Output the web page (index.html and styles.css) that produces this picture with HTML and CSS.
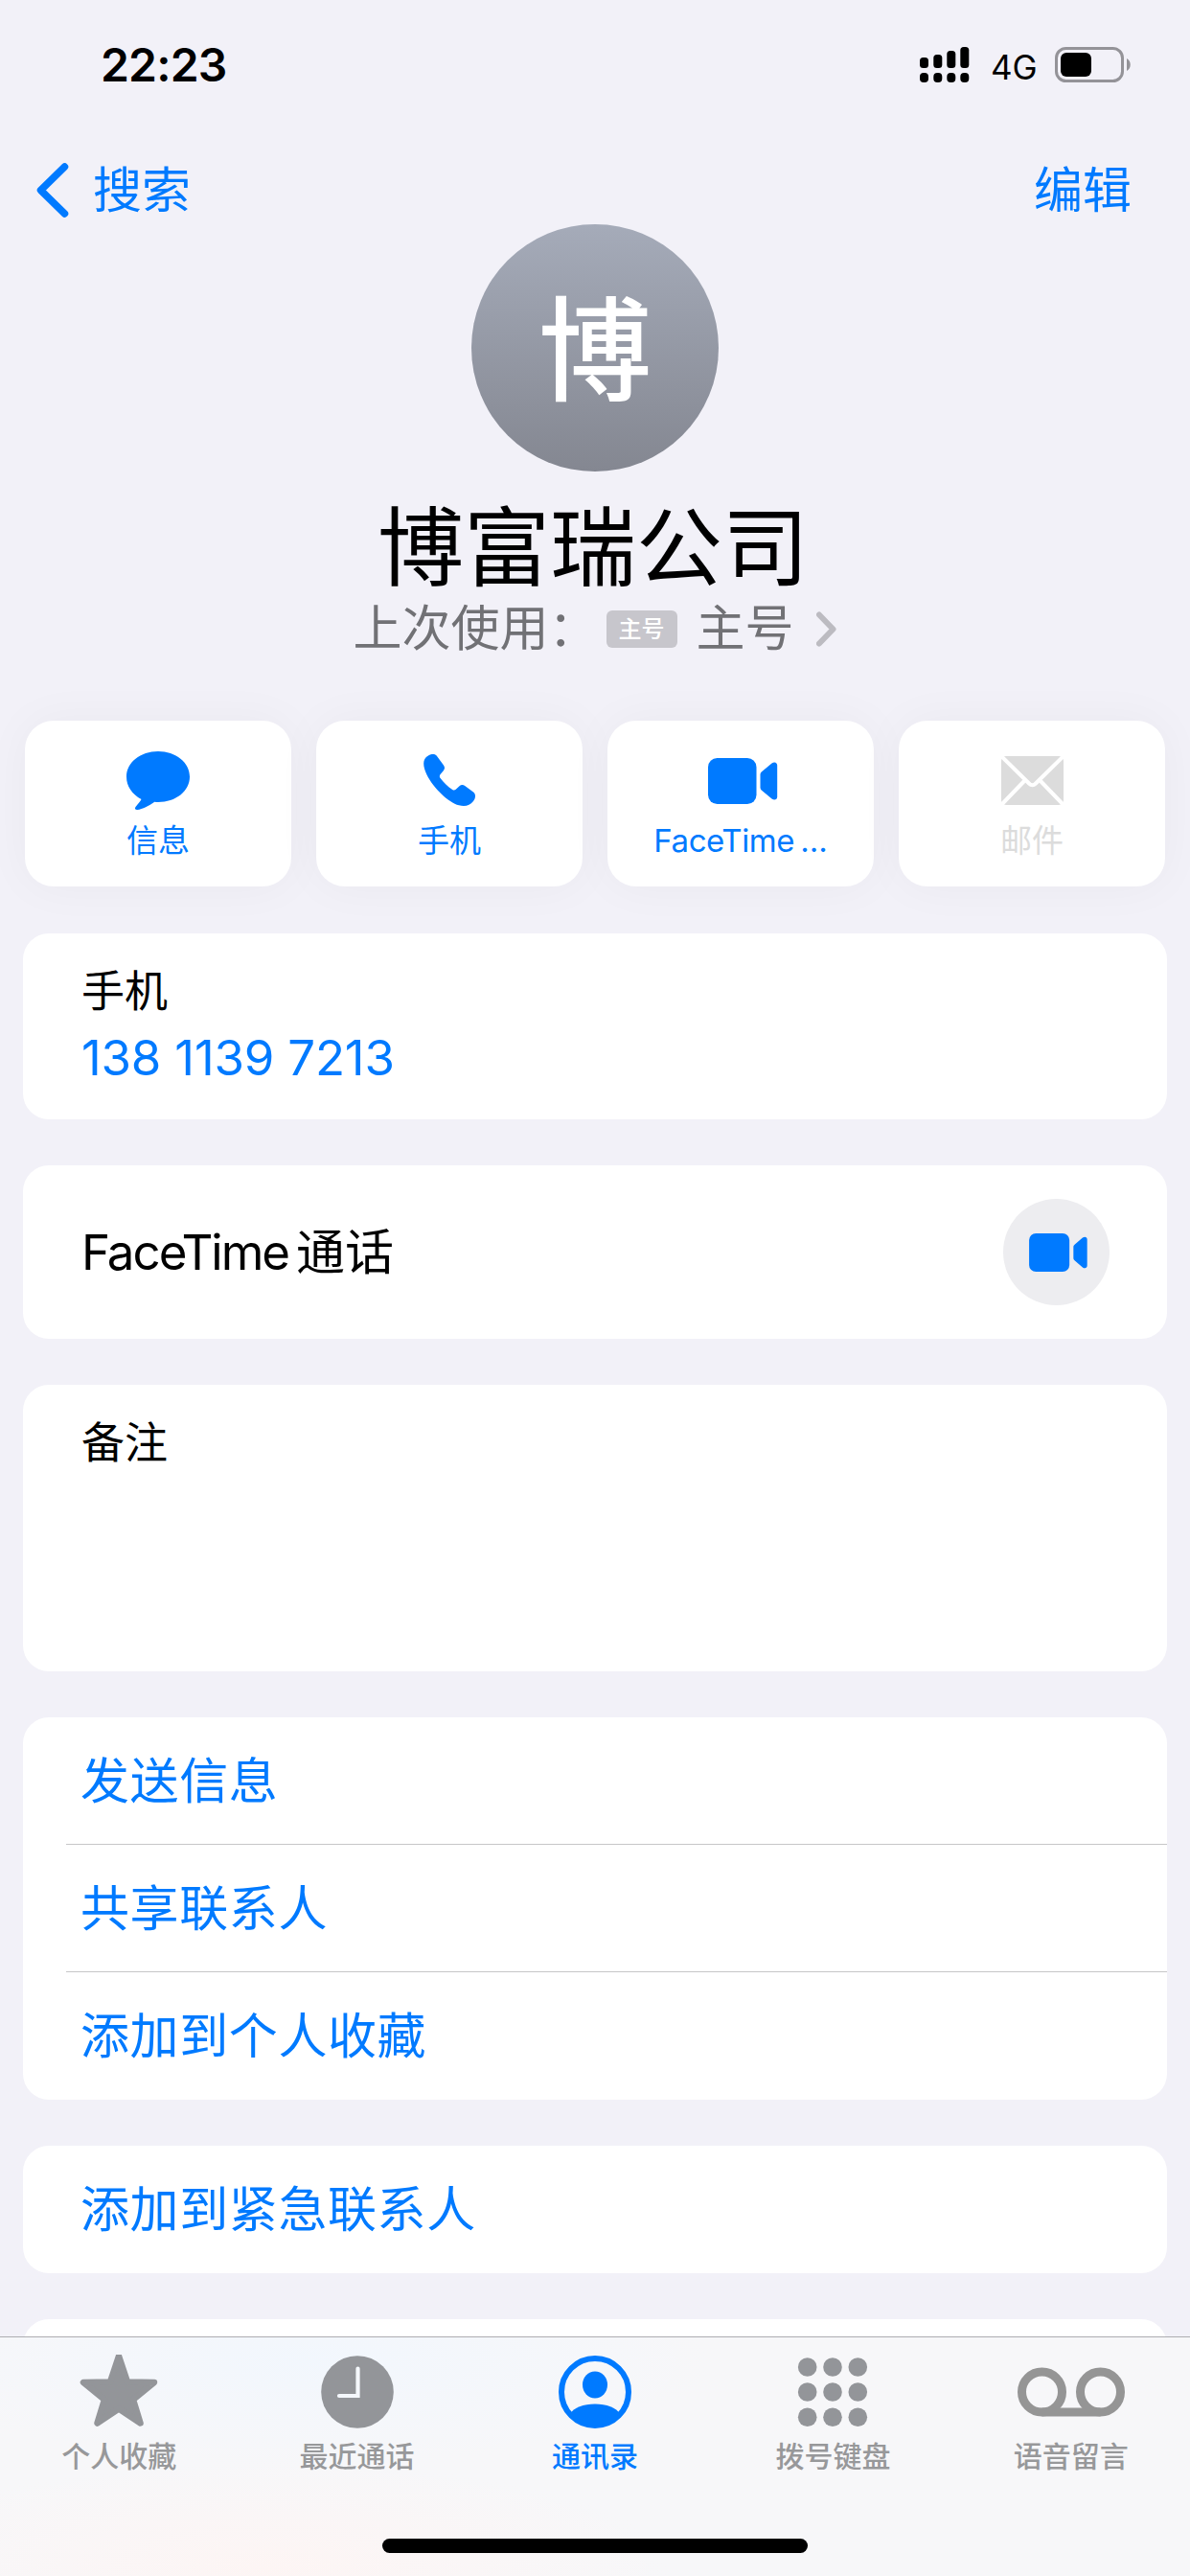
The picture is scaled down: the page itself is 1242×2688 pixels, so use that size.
FILE: index.html
```html
<!DOCTYPE html>
<html lang="zh-CN">
<head>
    <meta charset="UTF-8">
    <meta name="viewport" content="width=device-width, initial-scale=1.0">
    <title>博富瑞公司</title>
    <link rel="stylesheet" href="styles.css">
</head>
<body>

<div class="status-bar">
    <div class="time">22:23</div>
    <div class="status-icons">
        <svg class="signal" width="52" height="38" viewBox="0 0 52 38">
            <rect x="0" y="11" width="9" height="11" rx="3.5"/>
            <rect x="14.3" y="8" width="9" height="14" rx="3.5"/>
            <rect x="28.3" y="4" width="9" height="18" rx="3.5"/>
            <rect x="42.3" y="0" width="9" height="22" rx="3.5"/>
            <rect x="0" y="27" width="9" height="10" rx="4"/>
            <rect x="14.3" y="27" width="9" height="10" rx="4"/>
            <rect x="28.3" y="27" width="9" height="10" rx="4"/>
            <rect x="42.3" y="27" width="9" height="10" rx="4"/>
        </svg>
        <span class="network">4G</span>
        <svg class="battery" width="80" height="38" viewBox="0 0 80 38">
            <rect x="1.5" y="1.5" width="69" height="34" rx="10" fill="none" stroke="#949398" stroke-width="3"/>
            <rect x="6" y="6" width="32" height="25" rx="6"/>
            <path d="M75 12c5 2.500 5 10.500 0 13z" fill="#949398"/>
        </svg>
    </div>
</div>

<div class="nav-bar">
    <a class="back">
        <svg width="34" height="57" viewBox="0 0 34 57"><path d="M29.500 4L4.500 28.500l25 24.500" fill="none" stroke="#007aff" stroke-width="7.500" stroke-linecap="round" stroke-linejoin="round"/></svg>
        <span>搜索</span>
    </a>
    <a class="edit"><span>编辑</span></a>
</div>

<div class="header">
    <div class="avatar">博</div>
    <h1>博富瑞公司</h1>
    <div class="last-used">
        <span>上次使用：</span>
        <span class="badge">主号</span>
        <span>主号</span>
        <svg width="22" height="37" viewBox="0 0 22 37"><path d="M3 3.500l14.500 15L3 33.500" fill="none" stroke="#bcbbc1" stroke-width="6" stroke-linecap="round" stroke-linejoin="round"/></svg>
    </div>
</div>

<div class="actions">
    <a class="action">
        <svg width="66" height="62" viewBox="0 0 66 62"><path d="M33 0C51.500 0 66 11.500 66 26.500S51.500 53 33 53c-1.300 0-2.500 0-3.700-.2C23.500 57 16.500 60.500 11.500 61c-2.500.2-3.300-1.600-1.800-3.300 2.500-3 4.800-5.700 5.800-7.800C6 45 0 36.500 0 26.500 0 11.500 14.500 0 33 0z"/></svg>
        <span>信息</span>
    </a>
    <a class="action">
        <svg width="54" height="55" viewBox="0 0 54 55"><path d="M5 1.500C9 -.6 12 -.5 14 2l7 9.500c1.400 2 1.300 3.800 0 5.500l-3.400 4c-1 1.200-1 2.500-.2 3.700 3.700 5 8 9.200 12.800 12.200 1.200.8 2.400.8 3.500-.2l3.800-3.500c1.800-1.500 3.800-1.600 5.700-.2l8.800 6.500c2.800 2.200 2.600 6.200-.2 9.800-3.300 4.200-8.500 5.800-14.800 4C26 50.500 10.500 35.500 3.500 21.500-.8 12.500-1.500 5 5 1.500z"/></svg>
        <span>手机</span>
    </a>
    <a class="action">
        <svg class="video-icon" width="73" height="48" viewBox="0 0 73 48"><rect width="50.500" height="48" rx="9.500"/><path d="M54.500 17.500c0-1.700.5-2.500 1.800-3.600L66.500 5.500c2.700-2.200 5.700-1 5.700 2.200v32.600c0 3.200-3 4.400-5.700 2.200L56.300 34.100c-1.300-1.100-1.800-1.900-1.800-3.600z"/></svg>
        <span class="latin-label">FaceTime<i>…</i></span>
    </a>
    <a class="action disabled">
        <svg width="65" height="51" viewBox="0 0 65 51">
            <rect width="65" height="51" rx="5"/>
            <path d="M-1 -1L29 28.500q3.500 3.500 7 0L66 -1M-1 52L24 26M66 52L41 26" fill="none" stroke="#fff" stroke-width="4"/>
        </svg>
        <span>邮件</span>
    </a>
</div>

<div class="card phone">
    <div class="label">手机</div>
    <div class="number">138 1139 7213</div>
</div>

<div class="card facetime">
    <div><span class="latin">FaceTime</span>通话</div>
    <a class="video-btn">
        <svg class="video-icon" width="61" height="40" viewBox="0 0 73 48"><rect width="50.500" height="48" rx="8.500"/><path d="M55.500 17.500c0-1.700.5-2.500 1.800-3.600L67 5.500c2.700-2.200 5.700-1 5.700 2.200v32.600c0 3.200-3 4.400-5.700 2.200L57.300 34.100c-1.300-1.100-1.800-1.900-1.800-3.600z"/></svg>
    </a>
</div>

<div class="card notes">
    <div class="label">备注</div>
</div>

<div class="card list">
    <a class="row">发送信息</a>
    <a class="row">共享联系人</a>
    <a class="row">添加到个人收藏</a>
</div>

<div class="card list">
    <a class="row">添加到紧急联系人</a>
</div>

<div class="card list">
    <a class="row"></a>
</div>

<div class="tab-bar">
    <div class="tabs">
        <a class="tab">
            <svg width="82" height="78" viewBox="0 0 82 78"><path d="M41 1.500L50 28.500l28 .5-22 18L63.500 71.500 41 56.500 18.500 71.500 26 47 4 29l28-.5z" stroke="#939599" stroke-width="6.500" stroke-linejoin="round"/></svg>
            <span>个人收藏</span>
        </a>
        <a class="tab">
            <svg width="76" height="78" viewBox="0 0 76 78"><circle cx="38" cy="39" r="37.800"/><path d="M38.500 14.500v28.500H19" fill="none" stroke="#f5f8fc" stroke-width="4.200" stroke-linecap="round"/></svg>
            <span>最近通话</span>
        </a>
        <a class="tab active">
            <svg width="78" height="78" viewBox="0 0 78 78">
                <circle cx="39" cy="39" r="35" fill="none" stroke="#007aff" stroke-width="6"/>
                <ellipse cx="39" cy="31.500" rx="13" ry="14"/>
                <path d="M12.500 62C17 55.500 27 51.500 39 51.500S61 55.500 65.500 62A36 36 0 0 1 12.500 62z"/>
            </svg>
            <span>通讯录</span>
        </a>
        <a class="tab">
            <svg width="74" height="78" viewBox="0 0 74 78">
                <circle cx="10.700" cy="13" r="9.800"/><circle cx="37" cy="13" r="9.800"/><circle cx="63.300" cy="13" r="9.800"/>
                <circle cx="10.700" cy="39" r="9.800"/><circle cx="37" cy="39" r="9.800"/><circle cx="63.300" cy="39" r="9.800"/>
                <circle cx="10.700" cy="65.300" r="9.800"/><circle cx="37" cy="65.300" r="9.800"/><circle cx="63.300" cy="65.300" r="9.800"/>
            </svg>
            <span>拨号键盘</span>
        </a>
        <a class="tab">
            <svg width="112" height="78" viewBox="0 0 112 78"><g fill="none" stroke="#959595" stroke-width="9"><circle cx="25.500" cy="39" r="21"/><circle cx="86.500" cy="39" r="21"/><path d="M25.500 60h61"/></g></svg>
            <span>语音留言</span>
        </a>
    </div>
    <div class="home-indicator"></div>
</div>

</body>
</html>
```

FILE: styles.css
```css
* {
    box-sizing: border-box;
}
body {
    margin: 0;
    height: 2688px;
    overflow: hidden;
    background-color: #f2f1f8;
    color: #000;
    font-family: Inter, "Noto Sans CJK SC", sans-serif;
    font-size: 51px;
    line-height: 60px;
}
svg {
    display: block;
    flex-shrink: 0;
}
a {
    color: #007aff;
    fill: #007aff;
}
.status-bar {
    display: flex;
    justify-content: space-between;
    height: 136px;
    padding: 38px 61px 0 105px;
}
.time {
    font-size: 48px;
    font-weight: 600;
    letter-spacing: -0.8px;
}
.status-icons {
    display: flex;
    align-items: flex-start;
    padding-top: 11px;
}
.network {
    width: 46px;
    margin: 0 21px 0 22px;
    font-size: 35px;
    line-height: 43px;
}
.nav-bar {
    display: flex;
    justify-content: space-between;
    align-items: center;
    height: 124px;
    margin-bottom: -26px;
    padding: 0 61px 0 38px;
}
.nav-bar span {
    padding-top: 2px;
}
.back {
    display: flex;
    align-items: center;
    gap: 25px;
}
.edit {
    display: flex;
}
.header {
    display: flex;
    flex-direction: column;
    align-items: center;
}
.avatar {
    width: 258px;
    height: 258px;
    padding-top: 3px;
    border-radius: 50%;
    background: linear-gradient(#a5abb9, #848791);
    color: #fff;
    font-size: 118px;
    font-weight: 500;
    line-height: 258px;
    text-align: center;
}
h1 {
    margin: 26px 0 0;
    padding-right: 4px;
    font-size: 90px;
    font-weight: 400;
    line-height: 108px;
}
.last-used {
    display: flex;
    align-items: center;
    color: #717175;
}
.badge {
    height: 39px;
    margin: 0 20px 0 9px;
    padding: 0 13px;
    border-radius: 6px;
    background-color: #c7c6cc;
    color: #fff;
    font-size: 24px;
    font-weight: 500;
    line-height: 39px;
}
.last-used svg {
    margin-left: 23px;
}
.actions {
    display: grid;
    grid-template-columns: repeat(4, 1fr);
    gap: 26px;
    margin: 66px 26px 49px;
}
.action {
    display: flex;
    flex-direction: column;
    align-items: center;
    height: 173px;
    padding-top: 20px;
    border-radius: 30px;
    background-color: #fff;
    box-shadow: 0 0 50px rgba(0, 0, 0, 0.04);
    font-size: 33px;
    line-height: 40px;
}
.action svg {
    margin: auto 0;
}
.action .video-icon {
    margin-left: 5px;
}
.action span {
    margin-bottom: 28px;
}
.latin-label {
    letter-spacing: -0.4px;
}
.latin-label i {
    margin-left: 6px;
    font-style: normal;
    letter-spacing: 0;
}
.action.disabled {
    color: #dcdcdc;
    fill: #dcdcdc;
}
.card {
    position: relative;
    margin: 0 24px 48px;
    border-radius: 27px;
    background-color: #fff;
}
.label {
    font-size: 45px;
}
.phone {
    height: 194px;
    padding: 31px 61px;
}
.number {
    margin-top: 9px;
    color: #007aff;
    letter-spacing: -0.2px;
}
.facetime {
    display: flex;
    justify-content: space-between;
    align-items: center;
    height: 181px;
    padding: 0 60px 0 61px;
}
.latin {
    margin-right: 8px;
    letter-spacing: -2px;
}
.video-btn {
    display: flex;
    align-items: center;
    justify-content: center;
    width: 111px;
    height: 111px;
    padding-left: 4px;
    border-radius: 50%;
    background-color: #ededf0;
}
.notes {
    height: 299px;
    padding: 31px 61px;
}
.row {
    display: block;
    height: 133px;
    margin-left: 45px;
    padding-left: 15px;
    letter-spacing: 0.6px;
    line-height: 134px;
}
.row:not(:last-child) {
    border-bottom: 1px solid #c6c6c8;
}
.tab-bar {
    position: fixed;
    left: 0;
    right: 0;
    bottom: 0;
    height: 250px;
    border-top: 1px solid #adadb1;
    background: radial-gradient(ellipse 420px 110px at 320px 25px, #f2f7fd, transparent), radial-gradient(ellipse 420px 110px at 280px 240px, #fdf5f4, transparent), #f7f7f9;
}
.tabs {
    display: grid;
    grid-template-columns: repeat(5, 1fr);
}
.tab {
    display: flex;
    flex-direction: column;
    align-items: center;
    padding-top: 18px;
    color: #97989a;
    fill: #939599;
    font-size: 30px;
    font-weight: 500;
    line-height: 40px;
}
.tab span {
    margin-top: 8px;
}
.tab.active {
    color: #007aff;
    fill: #007aff;
}
.home-indicator {
    width: 444px;
    height: 15px;
    margin: 66px auto 0;
    border-radius: 8px;
    background-color: #000;
}
```
